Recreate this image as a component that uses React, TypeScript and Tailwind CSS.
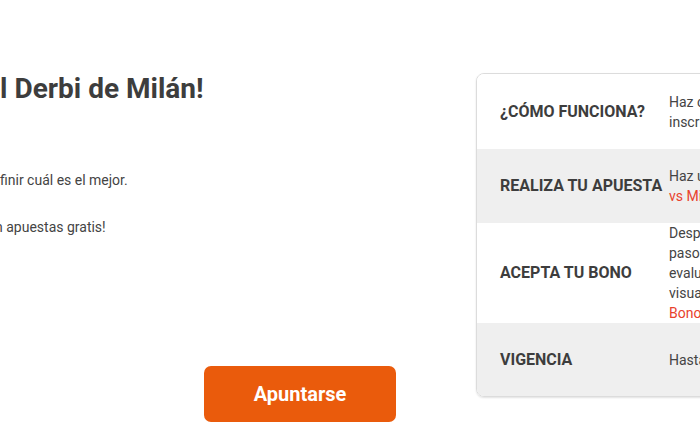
const rows = [
  {
    label: "¿CÓMO FUNCIONA?",
    lines: [["Haz clic en “Apuntarse” para"], ["inscribirte en la promoción."]],
    bg: "bg-white",
    h: "h-[75px]",
    align: "items-center",
  },
  {
    label: "REALIZA TU APUESTA",
    lines: [["Haz una apuesta en el partido Inter"], [null, "vs Milan"]],
    bg: "bg-[#efefef]",
    h: "h-[74px]",
    align: "items-center",
  },
  {
    label: "ACEPTA TU BONO",
    lines: [
      ["Después de completar los"],
      ["pasos anteriores, nosotros"],
      ["evaluaremos tu apuesta y"],
      ["visualizarás el bono en"],
      [null, "Bonos"],
    ],
    bg: "bg-white",
    h: "h-[100px]",
    align: "items-start",
  },
  {
    label: "VIGENCIA",
    lines: [["Hasta el 22 de febrero de 2025."]],
    bg: "bg-[#efefef]",
    h: "h-[73px]",
    align: "items-center",
  },
];

export default function App() {
  return (
    <div className="w-[700px] h-[439px] overflow-hidden bg-white flex pt-[73px] font-['Roboto',sans-serif]">
      <div className="w-[456px] shrink-0 flex flex-col">
        <div className="text-[#3d3d3d]">
          <h1 className="-ml-[15px] text-[28px] leading-[32px] font-bold whitespace-nowrap">el Derbi de Milán!</h1>
          <p className="mt-[65px] text-[14px] leading-[20px] text-[#444] whitespace-nowrap">finir cuál es el mejor.</p>
          <p className="-ml-[5px] mt-[27px] text-[14px] leading-[20px] text-[#444] whitespace-nowrap">n apuestas gratis!</p>
        </div>
        <div className="mt-[129px] pl-[204px]">
          <button className="w-[192px] h-[56px] rounded-[7px] bg-[#ea5b0c] text-white text-[20px] font-bold">
            Apuntarse
          </button>
        </div>
      </div>

      <div className="ml-[20px] w-[420px] shrink-0 self-start border border-[#dcdcdc] rounded-[8px] overflow-hidden shadow-[0_1px_2px_rgba(0,0,0,0.12)]">
        {rows.map((r) => (
          <div key={r.label} className={`flex ${r.bg} ${r.h}`}>
            <div className="w-[192px] shrink-0 pl-[23px] flex items-center text-[16px] font-bold text-[#3d3d3d] whitespace-nowrap">
              {r.label}
            </div>
            <div className={`flex ${r.align}`}>
              <div className="text-[14px] leading-[20px] text-[#444] whitespace-nowrap">
                {r.lines.map((l, i) => (
                  <div key={i}>
                    {l[0]}
                    {l[1] && <span className="text-[#e8422d]">{l[1]}</span>}
                  </div>
                ))}
              </div>
            </div>
          </div>
        ))}
      </div>
    </div>
  );
}
